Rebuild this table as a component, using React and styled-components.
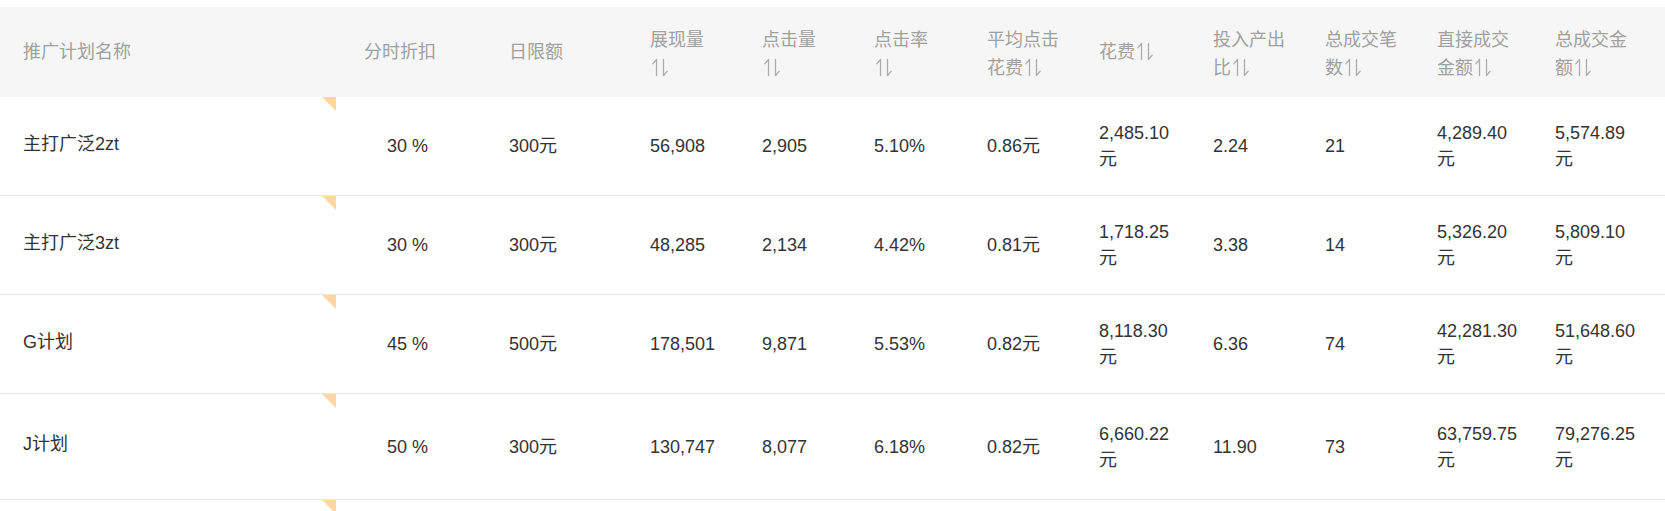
import React from "react";
import styled, { createGlobalStyle } from "styled-components";

const GlobalStyle = createGlobalStyle`
  html, body {
    margin: 0;
    padding: 0;
    background: #ffffff;
    overflow: hidden;
  }
  body {
    font-family: "Liberation Sans", "Noto Sans CJK SC", sans-serif;
  }
`;

const COLS = "336px 173px 141px 112px 112px 113px 112px 114px 112px 112px 118px 1fr";

const Page = styled.div`
  width: 1665px;
  padding-top: 7px;
`;

const HeadRow = styled.div`
  display: grid;
  grid-template-columns: ${COLS};
  align-items: center;
  height: 90px;
  background: #f6f6f6;
`;

const HeadCell = styled.div`
  padding-left: ${(p) => p.$indent || 0}px;
  padding-top: ${(p) => (p.$twoLine ? 4 : 0)}px;
  white-space: pre-line;
  font-size: 18px;
  line-height: 28px;
  color: #a0a0a0;
`;

const SortIcon = styled.svg`
  display: inline-block;
  width: 18px;
  height: 19px;
  margin-left: 1px;
  vertical-align: -3px;
  color: #adadad;
`;

const BodyRow = styled.div`
  display: grid;
  grid-template-columns: ${COLS};
  align-items: center;
  height: ${(p) => p.$height}px;
  border-bottom: 1px solid #e7e7e7;
`;

const NameCell = styled.div`
  position: relative;
  align-self: stretch;
  display: flex;
  align-items: center;
  padding-left: 23px;
  padding-bottom: 9px;
  box-sizing: border-box;
  font-size: 18px;
  color: #333333;

  &::after {
    content: "";
    position: absolute;
    top: 0;
    right: 0;
    width: 14px;
    height: 14px;
    background: #fdd6a2;
    clip-path: polygon(0 0, 100% 0, 100% 100%);
  }
`;

const Cell = styled.div`
  padding-left: ${(p) => p.$indent || 0}px;
  white-space: pre-line;
  font-size: 18px;
  line-height: 26px;
  color: #333333;
`;

const Sort = () => (
  <SortIcon viewBox="0 0 18 19" fill="none" stroke="currentColor" strokeWidth="1.3" strokeLinecap="round">
    <path d="M5.5 1.5 V17.5 M5.5 1.5 L1.8 5.8" />
    <path d="M12.5 1.5 V17.5 M12.5 17.5 L16.2 13.2" />
  </SortIcon>
);

const headers = [
  { label: "推广计划名称", indent: 23 },
  { label: "分时折扣", indent: 28 },
  { label: "日限额" },
  { label: "展现量\n", sort: true, two: true },
  { label: "点击量\n", sort: true, two: true },
  { label: "点击率\n", sort: true, two: true },
  { label: "平均点击\n花费", sort: true, two: true },
  { label: "花费", sort: true },
  { label: "投入产出\n比", sort: true, two: true },
  { label: "总成交笔\n数", sort: true, two: true },
  { label: "直接成交\n金额", sort: true, two: true },
  { label: "总成交金\n额", sort: true, two: true },
];

const rows = [
  { name: "主打广泛2zt", cells: ["30 %", "300元", "56,908", "2,905", "5.10%", "0.86元", "2,485.10\n元", "2.24", "21", "4,289.40\n元", "5,574.89\n元"], height: 98 },
  { name: "主打广泛3zt", cells: ["30 %", "300元", "48,285", "2,134", "4.42%", "0.81元", "1,718.25\n元", "3.38", "14", "5,326.20\n元", "5,809.10\n元"], height: 98 },
  { name: "G计划", cells: ["45 %", "500元", "178,501", "9,871", "5.53%", "0.82元", "8,118.30\n元", "6.36", "74", "42,281.30\n元", "51,648.60\n元"], height: 98 },
  { name: "J计划", cells: ["50 %", "300元", "130,747", "8,077", "6.18%", "0.82元", "6,660.22\n元", "11.90", "73", "63,759.75\n元", "79,276.25\n元"], height: 105 },
  { name: "", cells: ["", "", "", "", "", "", "", "", "", "", ""], height: 98 },
];

export default function App() {
  return (
    <>
      <GlobalStyle />
      <Page>
        <HeadRow>
          {headers.map((h, i) => (
            <HeadCell key={i} $indent={h.indent} $twoLine={h.two}>
              {h.label}
              {h.sort && <Sort />}
            </HeadCell>
          ))}
        </HeadRow>
        {rows.map((r, ri) => (
          <BodyRow key={ri} $height={r.height}>
            <NameCell>{r.name}</NameCell>
            {r.cells.map((c, ci) => (
              <Cell key={ci} $indent={ci === 0 ? 51 : 0}>
                {c}
              </Cell>
            ))}
          </BodyRow>
        ))}
      </Page>
    </>
  );
}
